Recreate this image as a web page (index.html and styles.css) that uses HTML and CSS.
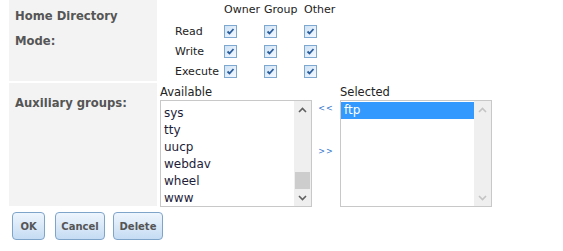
FILE: index.html
```html
<!DOCTYPE html>
<html lang="en">
<head>
    <meta charset="UTF-8">
    <title>User settings</title>
    <link rel="stylesheet" href="styles.css">
</head>
<body>
    <div class="form">
        <!-- mode row -->
        <div class="row row-mode">
            <div class="label">Home Directory<br>Mode:</div>
            <div class="value">
                <div class="perm-grid">
                    <span></span>
                    <span class="perm-head">Owner</span>
                    <span class="perm-head">Group</span>
                    <span class="perm-head">Other</span>

                    <span class="perm-name">Read</span>
                    <span class="check"><svg viewBox="0 0 11 11"><path d="M2.5 5.5 L4.5 7.5 L8.5 3" /></svg></span>
                    <span class="check"><svg viewBox="0 0 11 11"><path d="M2.5 5.5 L4.5 7.5 L8.5 3" /></svg></span>
                    <span class="check"><svg viewBox="0 0 11 11"><path d="M2.5 5.5 L4.5 7.5 L8.5 3" /></svg></span>

                    <span class="perm-name">Write</span>
                    <span class="check"><svg viewBox="0 0 11 11"><path d="M2.5 5.5 L4.5 7.5 L8.5 3" /></svg></span>
                    <span class="check"><svg viewBox="0 0 11 11"><path d="M2.5 5.5 L4.5 7.5 L8.5 3" /></svg></span>
                    <span class="check"><svg viewBox="0 0 11 11"><path d="M2.5 5.5 L4.5 7.5 L8.5 3" /></svg></span>

                    <span class="perm-name">Execute</span>
                    <span class="check"><svg viewBox="0 0 11 11"><path d="M2.5 5.5 L4.5 7.5 L8.5 3" /></svg></span>
                    <span class="check"><svg viewBox="0 0 11 11"><path d="M2.5 5.5 L4.5 7.5 L8.5 3" /></svg></span>
                    <span class="check"><svg viewBox="0 0 11 11"><path d="M2.5 5.5 L4.5 7.5 L8.5 3" /></svg></span>
                </div>
            </div>
        </div>

        <!-- groups row -->
        <div class="row row-groups">
            <div class="label">Auxiliary groups:</div>
            <div class="value groups">
                <div class="list-col">
                    <div class="list-title">Available</div>
                    <div class="listbox">
                        <ul class="items">
                            <li>sys</li>
                            <li>tty</li>
                            <li>uucp</li>
                            <li>webdav</li>
                            <li>wheel</li>
                            <li>www</li>
                        </ul>
                        <div class="scrollbar">
                            <span class="arrow"><svg viewBox="0 0 9 6"><polyline points="1,5 4.5,1.5 8,5" /></svg></span>
                            <span class="track"><span class="thumb"></span></span>
                            <span class="arrow"><svg viewBox="0 0 9 6"><polyline points="1,1 4.5,4.5 8,1" /></svg></span>
                        </div>
                    </div>
                </div>
                <div class="movers">
                    <a href="#" class="mover">&lt;&lt;</a>
                    <a href="#" class="mover">&gt;&gt;</a>
                </div>
                <div class="list-col">
                    <div class="list-title">Selected</div>
                    <div class="listbox">
                        <ul class="items">
                            <li class="selected">ftp</li>
                        </ul>
                        <div class="scrollbar disabled">
                            <span class="arrow"><svg viewBox="0 0 9 6"><polyline points="1,5 4.5,1.5 8,5" /></svg></span>
                            <span class="track"></span>
                            <span class="arrow"><svg viewBox="0 0 9 6"><polyline points="1,1 4.5,4.5 8,1" /></svg></span>
                        </div>
                    </div>
                </div>
            </div>
        </div>
    </div>

    <div class="buttons">
        <button class="btn btn-ok">OK</button>
        <button class="btn btn-cancel">Cancel</button>
        <button class="btn btn-delete">Delete</button>
    </div>
</body>
</html>
```

FILE: styles.css
```css
* {
    margin: 0;
    padding: 0;
    box-sizing: border-box;
}

body {
    font-family: 'DejaVu Sans', Verdana, sans-serif;
    font-size: 11px;
    color: #222;
    background: #fff;
    padding-left: 9px;
}

.form {
    display: flex;
    flex-direction: column;
    gap: 2px;
}

.row {
    display: flex;
}

.label {
    width: 148px;
    background-color: #f3f3f3;
    color: #555;
    font-weight: bold;
    font-size: 11.6px;
    padding-left: 6px;
}

.row-mode {
    height: 81px;
}

.row-mode .label {
    line-height: 25px;
    padding-top: 4px;
}

.row-groups {
    height: 123px;
}

.row-groups .label {
    padding-top: 13px;
}

.value {
    padding-left: 4px;
}

/* permission checkboxes */
.perm-grid {
    display: grid;
    grid-template-columns: 49px 40px 40px 40px;
    grid-auto-rows: 20px;
    align-items: center;
    padding-left: 14px;
    margin-top: 1px;
}

.perm-head {
    line-height: 18px;
    align-self: start;
}

.check {
    width: 13px;
    height: 13px;
    border: 1px solid #7ea8cf;
    background: linear-gradient(135deg, #cfe2f5, #f4f9ff);
    display: block;
}

.check svg {
    display: block;
    width: 11px;
    height: 11px;
}

.check path {
    fill: none;
    stroke: #2a5d9c;
    stroke-width: 1.8;
}

/* group lists */
.groups {
    display: flex;
    padding-left: 3px;
}

.list-title {
    line-height: 16px;
    margin-top: 1px;
    font-size: 11.5px;
}

.listbox {
    width: 152px;
    height: 107px;
    border: 1px solid #c8c8c8;
    display: flex;
    background: #fff;
}

.items {
    list-style: none;
    flex: 1;
    padding-top: 4px;
    font-size: 12px;
    color: #1d1d3a;
}

.items li {
    height: 17px;
    line-height: 17px;
    padding-left: 3px;
}

.items li.selected {
    background-color: #3399ff;
    color: #fff;
    margin-top: -3px;
}

.scrollbar {
    width: 17px;
    background-color: #efefef;
    display: flex;
    flex-direction: column;
}

.scrollbar .arrow {
    height: 17px;
    display: flex;
    align-items: center;
    justify-content: center;
}

.scrollbar svg {
    width: 9px;
    height: 6px;
}

.scrollbar polyline {
    fill: none;
    stroke: #606060;
    stroke-width: 1.6;
}

.scrollbar .track {
    flex: 1;
    display: flex;
    flex-direction: column;
    justify-content: flex-end;
}

.scrollbar .thumb {
    height: 17px;
    margin: 0 1px 0 1px;
    background-color: #cdcdcd;
}

.scrollbar.disabled polyline {
    stroke: #c4c4c4;
}

.movers {
    width: 28px;
    display: flex;
    flex-direction: column;
    align-items: center;
    padding-top: 21px;
    gap: 34px;
}

.mover {
    color: #3377cc;
    text-decoration: none;
    font-size: 8px;
    letter-spacing: 1px;
}

/* buttons */
.buttons {
    display: flex;
    gap: 10px;
    padding-left: 3px;
    margin-top: 6px;
}

.btn {
    height: 28px;
    border: 1px solid #7fa4c9;
    border-radius: 4px;
    background: linear-gradient(#eef5fd, #c5dcf3);
    color: #555;
    font-family: 'DejaVu Sans', Verdana, sans-serif;
    font-size: 10px;
    font-weight: bold;
    cursor: pointer;
}

.btn-ok {
    width: 33px;
}

.btn-cancel {
    width: 50px;
}

.btn-delete {
    width: 50px;
    margin-left: -2px;
}
```
